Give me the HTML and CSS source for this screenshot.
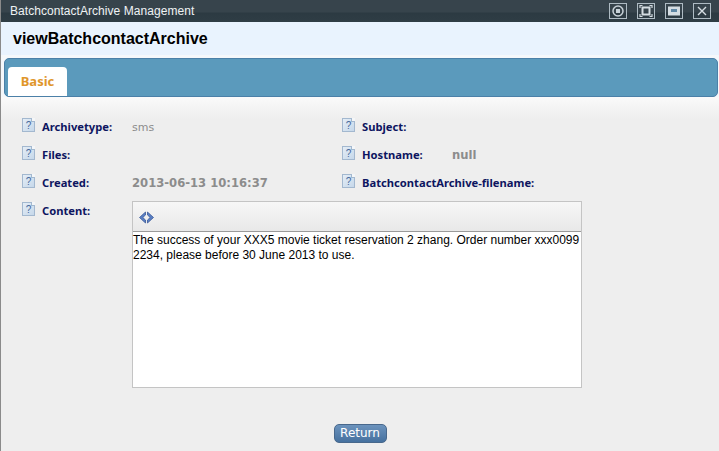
FILE: index.html
```html
<!DOCTYPE html>
<html lang="en">
<head>
    <meta charset="UTF-8">
    <meta name="viewport" content="width=device-width, initial-scale=1.0">
    <title>BatchcontactArchive Management</title>
    <link rel="stylesheet" href="styles.css">
</head>
<body>
    <!-- Barra da janela -->
    <div class="barra">
        <span class="barra-titulo">BatchcontactArchive Management</span>
        <div class="barra-botoes">
            <span class="btn-janela">
                <svg width="16" height="14" viewBox="0 0 16 14"><circle cx="8" cy="7" r="5" fill="none" stroke="#c8d2d8" stroke-width="1.5"/><rect x="6" y="5" width="4" height="4" fill="#c8d2d8"/></svg>
            </span>
            <span class="btn-janela">
                <svg width="16" height="14" viewBox="0 0 16 14"><path d="M2 4V1.500h2.500M11.500 1.500H14V4M14 10v2.500h-2.500M4.500 12.500H2V10" fill="none" stroke="#d5dde2" stroke-width="1.200"/><rect x="4.500" y="3.500" width="7" height="7" fill="none" stroke="#d5dde2" stroke-width="2"/></svg>
            </span>
            <span class="btn-janela">
                <svg width="16" height="14" viewBox="0 0 16 14"><rect x="2" y="2.500" width="12" height="9" fill="#d5dde2"/><rect x="5" y="5" width="6" height="3" fill="#5e86a3"/></svg>
            </span>
            <span class="btn-janela">
                <svg width="16" height="14" viewBox="0 0 16 14"><path d="M4 3l8 8M12 3l-8 8" stroke="#d5dde2" stroke-width="1.400"/></svg>
            </span>
        </div>
    </div>

    <div class="cabecalho">viewBatchcontactArchive</div>

    <div class="abas-area">
        <div class="abas">
            <div class="aba">Basic</div>
        </div>
    </div>

    <div class="conteudo">
        <div class="campos">
            <div class="campo">
                <span class="ajuda">?</span>
                <span class="rotulo">Archivetype:</span>
                <span class="valor valor-curto">sms</span>
            </div>
            <div class="campo">
                <span class="ajuda">?</span>
                <span class="rotulo">Subject:</span>
            </div>
            <div class="campo">
                <span class="ajuda">?</span>
                <span class="rotulo">Files:</span>
            </div>
            <div class="campo">
                <span class="ajuda">?</span>
                <span class="rotulo">Hostname:</span>
                <span class="valor">null</span>
            </div>
            <div class="campo">
                <span class="ajuda">?</span>
                <span class="rotulo">Created:</span>
                <span class="valor">2013-06-13 10:16:37</span>
            </div>
            <div class="campo">
                <span class="ajuda">?</span>
                <span class="rotulo">BatchcontactArchive-filename:</span>
            </div>
        </div>

        <div class="campo-conteudo">
            <span class="ajuda">?</span>
            <span class="rotulo">Content:</span>
            <div class="editor">
                <div class="editor-barra">
                    <svg width="17" height="13" viewBox="0 0 17 13"><path d="M7.500 1L1.500 6.500 7.500 12V9L4.800 6.500 7.500 4z" fill="#5b80c4" stroke="#2b4c8f" stroke-width=".7"/><path d="M9.500 1l6 5.500-6 5.500V9l2.700-2.500L9.500 4z" fill="#5b80c4" stroke="#2b4c8f" stroke-width=".7"/></svg>
                </div>
                <div class="editor-texto">The success of your XXX5 movie ticket reservation 2 zhang. Order number xxx0099 2234, please before 30 June 2013 to use.</div>
            </div>
        </div>

        <div class="acoes">
            <button class="btn-voltar">Return</button>
        </div>
    </div>
</body>
</html>
```

FILE: styles.css
```css
html, body {
    height: 100%;
}

body {
    margin: 0;
    background-color: #eeeeee;
    border-left: 1px solid #8a8a8a;
    font-family: "Liberation Sans", Arial, sans-serif;
    display: flex;
    flex-direction: column;
    overflow: hidden;
}

.barra {
    height: 22px;
    flex: none;
    display: flex;
    align-items: center;
    justify-content: space-between;
    padding: 0 8px 0 9px;
    background: linear-gradient(#37444c 0, #37444c 12px, #2c3a42 13px, #2f3d45 100%);
}

.barra-titulo {
    font-size: 12px;
    letter-spacing: 0.05px;
    color: #eef2f4;
}

.barra-botoes {
    display: flex;
    gap: 10px;
}

.btn-janela {
    width: 16px;
    height: 14px;
    border: 1px solid #aebbc3;
    display: block;
}

.btn-janela svg {
    display: block;
}

.cabecalho {
    height: 33px;
    flex: none;
    padding-left: 12px;
    background-color: #e9f3fe;
    color: #000;
    font-size: 16px;
    font-weight: bold;
    line-height: 33px;
}

.abas-area {
    flex: none;
    padding: 3px 1px 0 3px;
    background-color: #f5f8fb;
}

.abas {
    height: 33px;
    padding: 4px 0 0 3px;
    background-color: #5b9abc;
    border: 1px solid #4b80a8;
    border-radius: 5px;
    display: flex;
    align-items: flex-end;
}

.aba {
    width: 59px;
    height: 29px;
    background-color: #fff;
    border-radius: 4px 4px 0 0;
    color: #e0962b;
    font-family: "Noto Sans", sans-serif;
    font-size: 13px;
    font-weight: bold;
    line-height: 29px;
    text-align: center;
}

.conteudo {
    flex: 1;
    padding: 0 0 0 21px;
    background: linear-gradient(#fafafa 0, #eeeeee 22px);
}

.campos {
    display: grid;
    grid-template-columns: 320px 1fr;
    grid-auto-rows: 28px;
    padding-top: 23px;
}

.campo, .campo-conteudo {
    display: flex;
    align-items: flex-start;
    height: 28px;
}

/* icone de ajuda: folha com canto dobrado */
.ajuda {
    position: relative;
    box-sizing: border-box;
    width: 13px;
    height: 14px;
    flex: none;
    margin: -2px 7px 0 0;
    padding-top: 1px;
    background: linear-gradient(135deg, #e4edf6, #c6d8ea);
    border: 1px solid #a3b8cf;
    color: #44689c;
    font-size: 10px;
    line-height: 11px;
    text-align: center;
}

.ajuda::after {
    content: "";
    position: absolute;
    top: -1px;
    right: -1px;
    width: 3px;
    height: 3px;
    background-color: #f4f6f8;
    border-left: 1px solid #a3b8cf;
    border-bottom: 1px solid #a3b8cf;
}

.rotulo {
    width: 90px;
    flex: none;
    margin-top: -1px;
    color: #0d1560;
    font-family: "Noto Sans", sans-serif;
    font-size: 11.200px;
    font-weight: bold;
    line-height: 15px;
    white-space: nowrap;
}

.valor {
    color: #8c8c8c;
    font-family: "DejaVu Sans", sans-serif;
    font-size: 11.600px;
    font-weight: bold;
    line-height: 15px;
    white-space: nowrap;
}

.valor-curto {
    font-weight: normal;
    font-size: 11px;
}

.campo-conteudo {
    height: auto;
}

.editor {
    width: 448px;
    margin-top: -3px;
    border: 1px solid #c4c4c4;
    background-color: #fff;
}

.editor-barra {
    height: 30px;
    padding: 9px 0 0 5px;
    box-sizing: border-box;
    background: linear-gradient(#f7f7f7, #e8e8e8);
    border-bottom: 1px solid #9a9a9a;
}

.editor-barra svg {
    display: block;
}

.editor-texto {
    height: 154px;
    color: #000;
    font-size: 12px;
    line-height: 15px;
    padding-top: 1px;
}

.acoes {
    display: flex;
    justify-content: center;
    padding: 36px 0 0 0;
    width: 676px;
}

.btn-voltar {
    width: 53px;
    height: 19px;
    padding: 0;
    background: linear-gradient(#6c93bd, #46719f);
    border: 1px solid #48688c;
    border-radius: 5px;
    color: #fff;
    font-family: "DejaVu Sans", sans-serif;
    font-size: 12px;
    line-height: 17px;
    cursor: pointer;
}
```
